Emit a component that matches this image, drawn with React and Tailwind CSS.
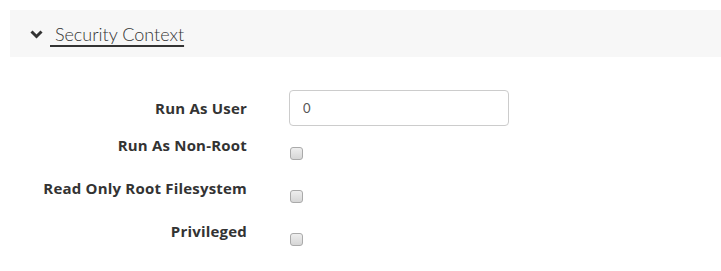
export default function App() {
  const rows = [
    { label: 'Run As Non-Root' },
    { label: 'Read Only Root Filesystem' },
    { label: 'Privileged' },
  ]

  return (
    <div className="min-h-screen bg-white pt-[10px] pl-[10px] text-[#333]" style={{ fontFamily: 'Lato, "Open Sans", sans-serif' }}>
      <div className="h-[47px] bg-[#f7f7f7] flex items-center pl-[20px]">
        <svg width="13" height="9" viewBox="0 0 13 9" className="mt-[1px]">
          <path d="M1.5 1.5 L6.5 6.5 L11.5 1.5" fill="none" stroke="#333" strokeWidth="3" />
        </svg>
        <a className="ml-[7px] text-[18px] font-light text-[#333] underline decoration-2 underline-offset-[4px] whitespace-pre leading-none">
          {' Security Context'}
        </a>
      </div>

      <div className="pt-[33px]" style={{ fontFamily: '"Open Sans", sans-serif' }}>
        <div className="flex items-center h-[36px]">
          <label className="w-[237px] text-right text-[15px] font-bold tracking-[0.2px]">Run As User</label>
          <input
            readOnly
            value="0"
            className="ml-[42px] w-[220px] h-[36px] border border-[#ccc] rounded-[4px] px-[13px] text-[13px] text-[#555] outline-none"
            style={{ fontFamily: 'Lato, sans-serif' }}
          />
        </div>
        <div className="pt-[9px]">
          {rows.map((r) => (
            <div key={r.label} className="flex h-[43px]">
              <label className="w-[237px] text-right text-[15px] font-bold tracking-[0.2px] leading-[20px]">{r.label}</label>
              <span className="ml-[43px] mt-[12px] w-[13px] h-[13px] rounded-[3px] border border-[#aaa] bg-gradient-to-b from-[#eee] to-[#d6d6d6]" />
            </div>
          ))}
        </div>
      </div>
    </div>
  )
}
